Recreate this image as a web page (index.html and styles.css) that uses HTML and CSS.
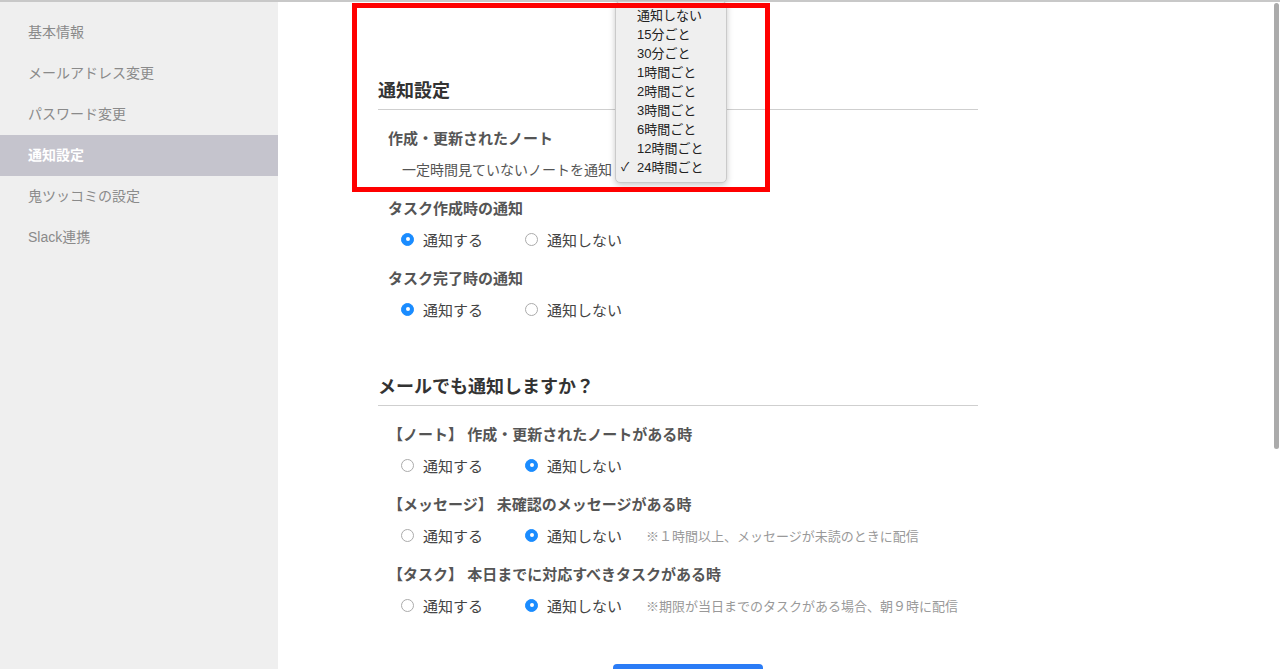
FILE: index.html
```html
<!DOCTYPE html>
<html lang="ja">
<head>
    <meta charset="UTF-8">
    <meta name="viewport" content="width=device-width, initial-scale=1.0">
    <title>通知設定</title>
    <link rel="stylesheet" href="styles.css">
</head>
<body>
    <div class="topline"></div>
    <div class="page">
        <div class="sidebar">
            <a class="nav-item">基本情報</a>
            <a class="nav-item">メールアドレス変更</a>
            <a class="nav-item">パスワード変更</a>
            <a class="nav-item active">通知設定</a>
            <a class="nav-item">鬼ツッコミの設定</a>
            <a class="nav-item">Slack連携</a>
        </div>

        <div class="main">
            <div class="highlight"></div>

            <h2 class="section-title">通知設定</h2>

            <div class="group">
                <div class="group-title">作成・更新されたノート</div>
                <div class="row sub">
                    一定時間見ていないノートを通知
                    <span class="select-wrap">
                        <div class="popup">
                            <div class="popup-item">通知しない</div>
                            <div class="popup-item">15分ごと</div>
                            <div class="popup-item">30分ごと</div>
                            <div class="popup-item">1時間ごと</div>
                            <div class="popup-item">2時間ごと</div>
                            <div class="popup-item">3時間ごと</div>
                            <div class="popup-item">6時間ごと</div>
                            <div class="popup-item">12時間ごと</div>
                            <div class="popup-item checked">24時間ごと</div>
                        </div>
                    </span>
                </div>
            </div>

            <div class="group">
                <div class="group-title">タスク作成時の通知</div>
                <div class="row">
                    <label class="option"><span class="radio on"></span>通知する</label>
                    <label class="option"><span class="radio"></span>通知しない</label>
                </div>
            </div>

            <div class="group">
                <div class="group-title">タスク完了時の通知</div>
                <div class="row">
                    <label class="option"><span class="radio on"></span>通知する</label>
                    <label class="option"><span class="radio"></span>通知しない</label>
                </div>
            </div>

            <h2 class="section-title mail">メールでも通知しますか？</h2>

            <div class="group">
                <div class="group-title">【ノート】 作成・更新されたノートがある時</div>
                <div class="row">
                    <label class="option"><span class="radio"></span>通知する</label>
                    <label class="option"><span class="radio on"></span>通知しない</label>
                </div>
            </div>

            <div class="group">
                <div class="group-title">【メッセージ】 未確認のメッセージがある時</div>
                <div class="row">
                    <label class="option"><span class="radio"></span>通知する</label>
                    <label class="option"><span class="radio on"></span>通知しない</label>
                    <span class="note">※１時間以上、メッセージが未読のときに配信</span>
                </div>
            </div>

            <div class="group">
                <div class="group-title">【タスク】 本日までに対応すべきタスクがある時</div>
                <div class="row">
                    <label class="option"><span class="radio"></span>通知する</label>
                    <label class="option"><span class="radio on"></span>通知しない</label>
                    <span class="note">※期限が当日までのタスクがある場合、朝９時に配信</span>
                </div>
            </div>

            <button class="save-button"></button>
        </div>
    </div>
    <div class="scrollbar"></div>
</body>
</html>
```

FILE: styles.css
```css
body {
    margin: 0;
    background: white;
    color: #444;
    font-family: "Liberation Sans", "Noto Sans CJK JP", sans-serif;
    overflow: hidden;
}

.topline {
    height: 2px;
    background: #c8c8c8;
}

.page {
    display: flex;
    min-height: 667px;
}

.sidebar {
    width: 278px;
    flex-shrink: 0;
    background: #efefef;
    padding-top: 10px;
    display: flex;
    flex-direction: column;
}

.nav-item {
    display: block;
    height: 41px;
    line-height: 41px;
    padding-left: 28px;
    font-size: 14px;
    color: #8a8a8a;
}

.nav-item.active {
    background: #c5c4cd;
    color: white;
    font-weight: bold;
}

.main {
    flex: 1;
    position: relative;
    padding: 77px 0 0 100px;
}

.highlight {
    position: absolute;
    left: 74px;
    top: 1px;
    width: 408px;
    height: 179px;
    border: 5px solid #ff0000;
    z-index: 5;
}

.section-title {
    width: 600px;
    margin: 0;
    padding-bottom: 6px;
    border-bottom: 1px solid #cfcfcf;
    font-size: 18px;
    line-height: 24px;
    color: #333;
    font-weight: bold;
}

.section-title.mail {
    margin-top: 56px;
}

.group {
    padding-left: 10px;
    margin-top: 20px;
}

.section-title + .group {
    margin-top: 19px;
}

.group-title {
    font-size: 15px;
    line-height: 20px;
    font-weight: bold;
    color: #555;
}

.row {
    display: flex;
    align-items: center;
    margin-top: 10px;
    padding-left: 13px;
    height: 20px;
    font-size: 15px;
    color: #444;
}

.row.sub {
    padding-left: 14px;
    font-size: 14px;
    color: #555;
}

.option {
    display: flex;
    align-items: center;
}

.option + .option {
    margin-left: 42px;
}

.radio {
    width: 11px;
    height: 11px;
    border: 1px solid #ababab;
    border-radius: 50%;
    background: white;
    margin-right: 9px;
    position: relative;
}

.radio.on {
    background: #1a8cff;
    border-color: #1a8cff;
}

.radio.on::after {
    content: "";
    position: absolute;
    left: 3.5px;
    top: 3.5px;
    width: 4px;
    height: 4px;
    border-radius: 50%;
    background: white;
}

.note {
    margin-left: 24px;
    font-size: 13px;
    color: #999;
}

.select-wrap {
    position: relative;
    display: inline-block;
    width: 112px;
    height: 20px;
    margin-left: 3px;
}

.popup {
    position: absolute;
    left: 0;
    bottom: -4px;
    width: 110px;
    padding: 4px 0 5px;
    background: #efefef;
    border: 1px solid #cacaca;
    border-radius: 5px;
    box-shadow: 0px 2px 6px rgba(0, 0, 0, 0.22);
    z-index: 4;
}

.popup-item {
    position: relative;
    height: 19px;
    line-height: 19px;
    padding-left: 21px;
    font-size: 13px;
    color: #222;
}

.popup-item.checked::before {
    content: "✓";
    position: absolute;
    left: 5px;
    top: 0;
    font-size: 12px;
}

.save-button {
    display: block;
    margin: 49px 0 0 235px;
    width: 150px;
    height: 40px;
    border: none;
    border-radius: 4px;
    background: #2b7cf6;
}

.scrollbar {
    position: fixed;
    top: 3px;
    right: 1px;
    width: 5px;
    height: 446px;
    border-radius: 3px;
    background: #ababab;
}
```
